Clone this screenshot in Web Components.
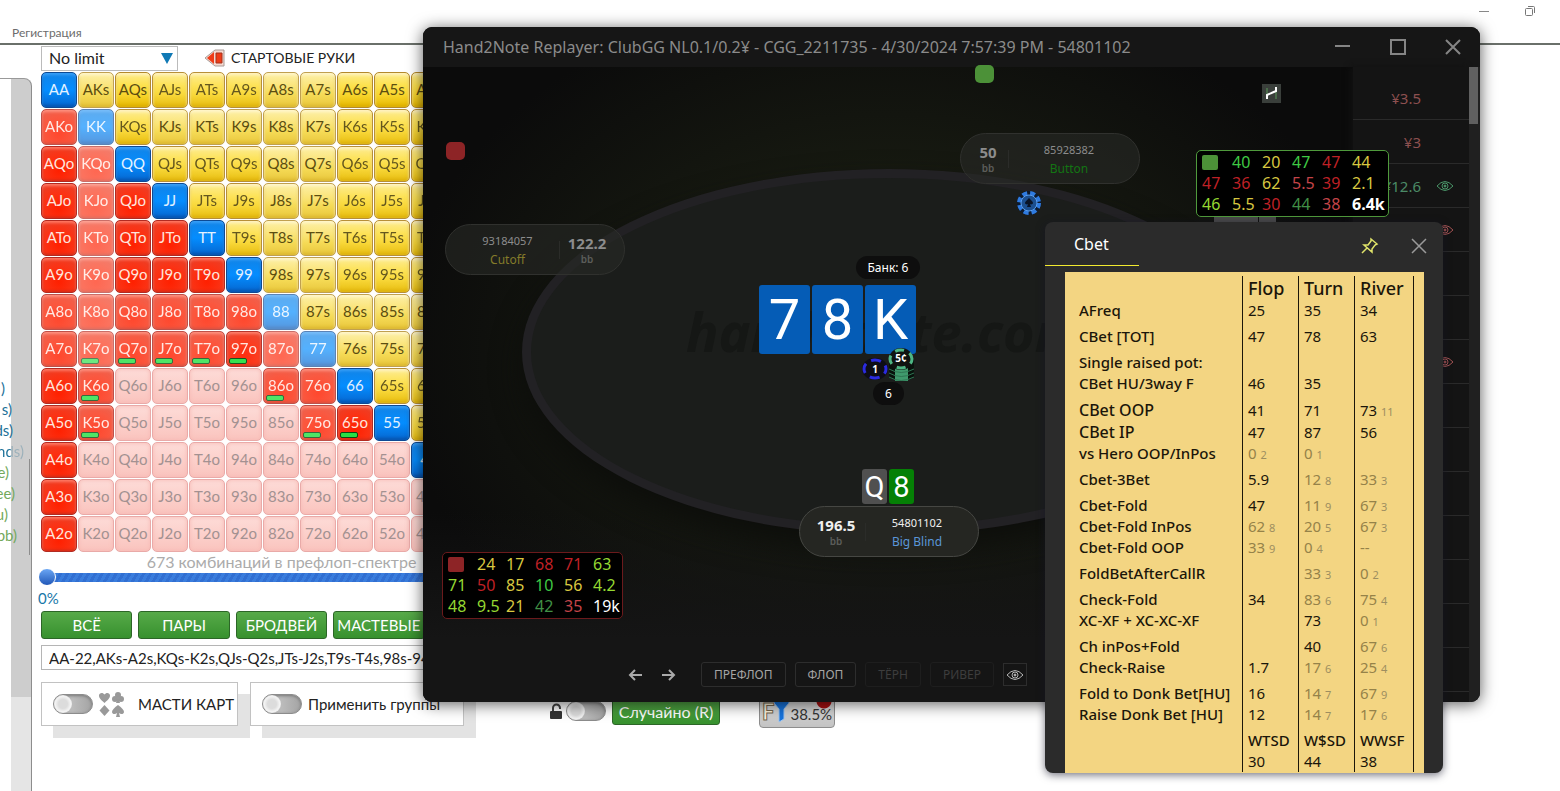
<!DOCTYPE html>
<html lang="ru">
<head>
<meta charset="UTF-8">
<meta name="viewport" content="width=device-width, initial-scale=1.0">
<title>Hand2Note Replayer</title>
<style>
    body {
        margin: 0;
        background: #fff;
        font-family: "Lato", "Open Sans", sans-serif;
        color: #222;
    }
</style>
</head>
<body>
<poker-desktop>
    <range-panel slot="main"></range-panel>
    <replayer-window slot="window" heading="Hand2Note Replayer: ClubGG NL0.1/0.2¥ - CGG_2211735 - 4/30/2024 7:57:39 PM - 54801102"></replayer-window>
    <hud-box class="hud-left" slot="window" color="#8d2426" line="#6b1a1c" col="29px"
        values="24:y 17:y 68:r 71:r 63:l 71:l 50:r 85:y 10:g 56:y 4.2:l 48:l 9.5:l 21:y 42:d 35:p 19k:w"></hud-box>
    <hud-box class="hud-right" slot="window" color="#4c9138" line="#4f9a3c" col="30px"
        values="40:g 20:y 47:g 47:r 44:y 47:r 36:r 62:y 5.5:p 39:r 2.1:y 46:l 5.5:y 30:r 44:d 38:p 6.4k:b"></hud-box>
    <stat-popup slot="window" heading="Cbet"></stat-popup>
</poker-desktop>

<script>
    // Page shell: top bar, left strip, main column, floating windows
    class PokerDesktop extends HTMLElement {
        constructor() {
            super();
            this.attachShadow({ mode: 'open' });
        }

        connectedCallback() {
            this.shadowRoot.innerHTML = `
                <style>
                    :host {
                        display: flex;
                        flex-direction: column;
                        position: relative;
                        height: 100vh;
                        overflow: hidden;
                    }
                    header {
                        display: flex;
                        justify-content: space-between;
                        height: 43px;
                        border-bottom: 2px solid #6a706a;
                    }
                    header a {
                        align-self: flex-end;
                        padding: 0 0 2px 12px;
                        font-size: 12px;
                        line-height: 16px;
                        color: #6c6c6c;
                        text-decoration: none;
                    }
                    .controls {
                        display: flex;
                        gap: 32px;
                        padding: 4px 23px 0 0;
                    }
                    button {
                        width: 14px;
                        height: 14px;
                        padding: 0;
                        border: 0;
                        background: none;
                    }
                    svg { display: block; }
                    .body {
                        display: flex;
                        flex: 1;
                        min-height: 0;
                    }
                    ::slotted([slot="main"]) { flex: 1; }
                    ::slotted([slot="window"]) { position: absolute; }
                    ::slotted(replayer-window) { top: 27px; left: 423px; right: 80px; bottom: 89px; }
                    ::slotted(.hud-left) { top: 552px; left: 442px; }
                    ::slotted(.hud-right) { top: 150px; right: 171px; padding-right: 6px; }
                    ::slotted(stat-popup) { top: 222px; right: 117px; bottom: 18px; }
                </style>
                <header>
                    <a href="#">Регистрация</a>
                    <div class="controls">
                        <button aria-label="Minimize"><svg width="14" height="14"><path d="M2 7.500h10" stroke="#888"/></svg></button>
                        <button aria-label="Restore"><svg width="14" height="14" fill="none" stroke="#777"><rect x="2.500" y="4.500" width="7" height="7" rx="1"/><path d="M5 2.500h5.500a1 1 0 0 1 1 1V9"/></svg></button>
                    </div>
                </header>
                <div class="body">
                    <side-strip></side-strip>
                    <slot name="main"></slot>
                </div>
                <slot name="window"></slot>
            `;
        }
    }

    // Cut-off legend and scroll track at the left edge
    class SideStrip extends HTMLElement {
        constructor() {
            super();
            this.attachShadow({ mode: 'open' });
        }

        connectedCallback() {
            const lines = [[')', 5, 'b'], ['s)', 12, 'b'], ['ds)', 13, 'b'], ['nds)', 24, 'b'],
                ['e)', 9, 'g'], ['ee)', 15, 'g'], ['u)', 8, 'g'], ['bb)', 17, 'g']];

            this.shadowRoot.innerHTML = `
                <style>
                    :host {
                        display: block;
                        box-sizing: border-box;
                        width: 32px;
                        margin-top: 33px;
                        border-top: 1px solid #999;
                        border-right: 1px solid #8d8d8d;
                        border-radius: 0 8px 0 0;
                        background: linear-gradient(#8d8d8d, #8d8d8d) 29px 380px / 1px 96px no-repeat,
                                    linear-gradient(#cdcdcd, #cdcdcd) 11px 0 / 20px 618px no-repeat,
                                    linear-gradient(#e5e5e5, #e5e5e5) 11px 618px / 20px 100% no-repeat;
                    }
                    ul {
                        margin: 0;
                        padding: 299px 0 0;
                        list-style: none;
                        font-size: 15px;
                        line-height: 21px;
                    }
                    li {
                        display: flex;
                        justify-content: flex-end;
                    }
                    .b { color: #1d7199; }
                    .g { color: #73a95c; }
                    /* text fades where it runs over the track */
                    .over {
                        background: linear-gradient(90deg, #1d7199 11px, #9bb0ba 11px);
                        background-clip: text;
                        -webkit-background-clip: text;
                        color: transparent;
                    }
                </style>
                <ul>
                    ${lines.map(([text, width, tone]) => `<li class="${tone} ${width > 20 ? 'over' : ''}" style="width:${width}px">${text}</li>`).join('')}
                </ul>
            `;
        }
    }

    class ToggleSwitch extends HTMLElement {
        constructor() {
            super();
            this.attachShadow({ mode: 'open' });
        }

        connectedCallback() {
            const label = this.getAttribute('label');

            this.shadowRoot.innerHTML = `
                <style>
                    :host { display: inline-flex; }
                    label {
                        display: flex;
                        align-items: center;
                        gap: 6px;
                    }
                    input {
                        appearance: none;
                        display: flex;
                        align-items: center;
                        box-sizing: border-box;
                        width: 40px;
                        height: 20px;
                        margin: 0;
                        border: 1px solid #8c8c8c;
                        border-radius: 10px;
                        background: linear-gradient(90deg, #bbb 50%, #a4a4a4);
                        box-shadow: inset 0 1px 3px #777;
                    }
                    input::before {
                        content: "";
                        width: 18px;
                        height: 18px;
                        border-radius: 50%;
                        background: radial-gradient(circle, #dcdcdc 35%, #f3f3f3 60%, #cfcfcf);
                    }
                    input:checked { justify-content: flex-end; }
                </style>
                <label><input type="checkbox" ${label ? `aria-label="${label}"` : ''}><slot></slot></label>
            `;
        }
    }

    class HandMatrix extends HTMLElement {
        constructor() {
            super();
            this.attachShadow({ mode: 'open' });
        }

        connectedCallback() {
            const ranks = 'AKQJT98765432';
            // one digit per hand: 4 is full weight, 0 is out of the range
            const weights = [
                '4243332244444', '2132222233333', '4143332233333', '4144332233333',
                '4144432233333', '4144442233333', '2122221222222', '2122231122222',
                '4200002243333', '4200000244333', '4000000000444', '4000000000044', '4000000000004'
            ];
            const marked = ['K7o', 'Q7o', 'J7o', 'T7o', '97o', 'K6o', '86o', 'K5o', '75o', '65o'];

            let cells = '';
            for (let r = 0; r < 13; r++) {
                for (let c = 0; c < 13; c++) {
                    const kind = r === c ? 'pair' : (c > r ? 'suited' : 'off');
                    const name = r === c ? ranks[r] + ranks[r]
                        : (c > r ? ranks[r] + ranks[c] + 's' : ranks[c] + ranks[r] + 'o');
                    const mark = marked.includes(name) ? 'marked' : '';
                    cells += `<button class="${kind} w${weights[r][c]} ${mark}">${name}</button>`;
                }
            }

            this.shadowRoot.innerHTML = `
                <style>
                    :host {
                        display: grid;
                        grid-template-columns: repeat(13, 36px);
                        grid-auto-rows: 36px;
                        gap: 1px;
                    }
                    button {
                        position: relative;
                        padding: 0 0 2px;
                        border: 1px solid #a98a2a;
                        border-radius: 5px;
                        font-family: inherit;
                        font-size: 15px;
                        line-height: 32px;
                        text-align: center;
                        white-space: nowrap;
                    }
                    .suited {
                        color: #5b4d10;
                        background: linear-gradient(#fdeb8e, #fde250 35%, #f8d52c 65%, #e6b800);
                        border-color: #b3892c;
                        box-shadow: inset 0 2px 3px #fff3c0, inset 0 -2px 3px #dcae00;
                    }
                    .off {
                        color: #ffe4dd;
                        background: radial-gradient(circle at 50% 70%, #ff2000, #fb3214 50%, #e8432c);
                        border-color: #b22b22;
                        box-shadow: inset 0 2px 3px #ff7b66, inset 0 -1px 3px #c92a18;
                    }
                    .pair {
                        color: #e4f2ff;
                        background: linear-gradient(#1283e6, #048dff 50%, #0666cf);
                        border-color: #0d4a94;
                        box-shadow: inset 0 2px 3px #3ba1f8, inset 0 -2px 3px #0754ae;
                    }
                    .w3 { opacity: 0.94; }
                    .w2 { opacity: 0.82; }
                    .w1 { opacity: 0.68; }
                    .w0 {
                        color: #a39191;
                        background: linear-gradient(#fddcd8, #fcd0cb 50%, #fac4be);
                        border-color: #e9aaa8;
                        box-shadow: inset 0 0 4px #f7b9b4;
                    }
                    .suited.w2 {
                        opacity: 1;
                        background: linear-gradient(#fdf0a8, #fae478 40%, #f5da55 65%, #e8c63c);
                        border-color: #c0a050;
                        box-shadow: inset 0 2px 3px #fff6cc, inset 0 -2px 3px #dcb830;
                    }
                    .marked::after {
                        content: "";
                        position: absolute;
                        left: 2px;
                        bottom: 2px;
                        width: 16px;
                        height: 4px;
                        border: 1px solid #0a4a12;
                        border-radius: 2px;
                        background: #28e045;
                    }
                </style>
                ${cells}
            `;
        }
    }

    class RangePanel extends HTMLElement {
        constructor() {
            super();
            this.attachShadow({ mode: 'open' });
        }

        connectedCallback() {
            this.shadowRoot.innerHTML = `
                <style>
                    :host {
                        display: block;
                        padding: 1px 0 0 9px;
                        font-size: 16px;
                    }
                    .top {
                        display: flex;
                        align-items: flex-start;
                        height: 26px;
                    }
                    .pick {
                        display: flex;
                        align-items: center;
                        box-sizing: border-box;
                        width: 137px;
                        height: 25px;
                        border: 1px solid #bbb;
                        padding-right: 4px;
                    }
                    select {
                        appearance: none;
                        flex: 1;
                        padding: 0 0 2px 7px;
                        border: 0;
                        background: none;
                        font: inherit;
                        color: inherit;
                    }
                    .hands {
                        display: flex;
                        align-items: center;
                        gap: 6px;
                        height: 23px;
                        margin-left: 26px;
                        padding: 0;
                        border: 0;
                        background: none;
                        font: inherit;
                        font-size: 14px;
                        color: inherit;
                    }
                    .range { width: 481px; }
                    .count {
                        margin: 0;
                        text-align: center;
                        line-height: 20px;
                        color: #ababab;
                    }
                    input[type="range"] {
                        appearance: none;
                        display: block;
                        width: 487px;
                        height: 18px;
                        margin: -4px 0 0 -3px;
                        background: repeating-linear-gradient(120deg, #3a7ddd 0 3px, #316fd2 3px 6px) 4px 5px / 100% 9px no-repeat;
                    }
                    input[type="range"]::-webkit-slider-thumb {
                        appearance: none;
                        width: 18px;
                        height: 18px;
                        border: 1px solid #fff;
                        border-radius: 50%;
                        background: linear-gradient(#6aa6f4, #2158b8);
                    }
                    output {
                        display: block;
                        margin-left: -3px;
                        padding: 3px 0 2px;
                        line-height: 18px;
                        font-size: 15px;
                        color: #1877a8;
                    }
                    .groups {
                        display: grid;
                        grid-template-columns: repeat(5, 1fr);
                        gap: 6px;
                        margin-top: 2px;
                    }
                    .green {
                        height: 28px;
                        padding: 0;
                        border: 1px solid #2c6627;
                        border-radius: 3px;
                        background: linear-gradient(#57aa49, #37912e);
                        font: inherit;
                        font-size: 15px;
                        color: #fff;
                    }
                    .combos {
                        display: block;
                        box-sizing: border-box;
                        width: 100%;
                        height: 25px;
                        margin-top: 6px;
                        padding: 0 7px;
                        border: 1px solid #b5b5b5;
                        font: inherit;
                        font-size: 15px;
                        color: inherit;
                    }
                    .options {
                        display: flex;
                        align-items: flex-start;
                        margin-top: 12px;
                    }
                    .card {
                        display: flex;
                        align-items: center;
                        box-sizing: border-box;
                        height: 44px;
                        margin-right: 12px;
                        padding-left: 11px;
                        border: 1px solid #c2c2c2;
                        background: #fff;
                        box-shadow: 12px 12px 0 #e3e3e3;
                    }
                    .suits { width: 197px; }
                    .apply { width: 214px; font-size: 15px; }
                    .suits span { padding-left: 8px; font-size: 15px; }
                    .tools {
                        display: flex;
                        align-items: center;
                        gap: 4px;
                        margin: 12px 0 0 74px;
                    }
                    .tools .green { width: 108px; margin-left: 2px; font-size: 16px; }
                    .filter {
                        display: flex;
                        align-items: flex-end;
                        height: 34px;
                        margin-left: 35px;
                        padding: 0 2px 4px;
                        border: 1px solid #8d8d8d;
                        border-radius: 4px;
                        background: radial-gradient(circle at 64px 6px, #a11 7px, #ddd 8px, transparent 9px),
                                    linear-gradient(#e2e2e2, #c3c3c3);
                        font: inherit;
                        font-size: 15px;
                        color: #333;
                    }
                    .filter b {
                        font-size: 22px;
                        line-height: 22px;
                        color: #fff6df;
                        -webkit-text-stroke: 1px #766850;
                    }
                </style>
                <div class="top">
                    <div class="pick">
                        <select aria-label="Лимит"><option>No limit</option></select>
                        <svg width="12" height="11"><path d="M0 0h12L6 11z" fill="#1079b5"/></svg>
                    </div>
                    <button class="hands">
                        <svg width="21" height="18"><path d="M1 9L11 1h9v16h-9z" fill="#f6d8cf" stroke="#a79b96"/><path d="M3 9l7-6v12z" fill="#ef3c18"/><path d="M12 4h6v10h-6z" fill="#ef3c18" stroke="#a3321c"/></svg>
                        СТАРТОВЫЕ РУКИ
                    </button>
                </div>
                <div class="range">
                    <hand-matrix></hand-matrix>
                    <p class="count">673 комбинаций в префлоп-спектре</p>
                    <input type="range" min="0" max="100" value="0" aria-label="Процент рук">
                    <output>0%</output>
                    <div class="groups">
                        <button class="green">ВСЁ</button>
                        <button class="green">ПАРЫ</button>
                        <button class="green">БРОДВЕЙ</button>
                        <button class="green">МАСТЕВЫЕ</button>
                    </div>
                    <input class="combos" type="text" aria-label="Диапазон" value="AA-22,AKs-A2s,KQs-K2s,QJs-Q2s,JTs-J2s,T9s-T4s,98s-94s">
                </div>
                <div class="options">
                    <div class="card suits">
                        <toggle-switch>
                            <svg width="25" height="25" fill="#999">
                                <path d="M5.500 11C1 7 0 5.500 0 3.500C0 .5 4 0 5.500 2.500C7 0 11 .5 11 3.500C11 5.500 10 7 5.500 11z"/>
                                <path d="M5.500 13l5 5.500-5 5.500-5-5.500z"/>
                                <circle cx="19" cy="3" r="3"/><circle cx="16" cy="7" r="3"/><circle cx="22" cy="7" r="3"/><path d="M19 4l2 7h-4z"/>
                                <path d="M19 13c4 3 6 5 6 7 0 2-3 3-5 1l1 4h-4l1-4c-2 2-5 1-5-1 0-2 2-4 6-7z"/>
                            </svg>
                            <span>МАСТИ КАРТ</span>
                        </toggle-switch>
                    </div>
                    <div class="card apply"><toggle-switch>Применить группы</toggle-switch></div>
                    <div class="tools">
                        <svg width="12" height="20" fill="none"><path d="M3 11V7a3 3 0 0 1 7 0v1" stroke="#444" stroke-width="2"/><rect y="10" width="12" height="8" rx="1" fill="#333"/></svg>
                        <toggle-switch label="Закрепить"></toggle-switch>
                        <button class="green">Случайно (R)</button>
                        <button class="filter">
                            <b>F</b>
                            <svg width="16" height="26"><path d="M0 3h15v3l-5 6v10l-5 3V12L0 6z" fill="#1673dd" stroke="#9ec5ef"/></svg>
                            38.5%
                        </button>
                    </div>
                </div>
            `;
        }
    }

    // Player plate on the table; reversed puts the stack on the right
    class PlayerSeat extends HTMLElement {
        constructor() {
            super();
            this.attachShadow({ mode: 'open' });
        }

        connectedCallback() {
            this.shadowRoot.innerHTML = `
                <style>
                    :host {
                        display: flex;
                        align-items: center;
                        box-sizing: border-box;
                        width: 180px;
                        height: 51px;
                        padding-right: 10px;
                        border: 1px solid #30312e;
                        border-radius: 26px;
                        background: rgba(40, 41, 38, 0.6);
                        color: #8c8c8c;
                        text-align: center;
                    }
                    :host([reversed]) { flex-direction: row-reverse; padding: 0 0 0 10px; }
                    :host([active]) { color: #f0f0f0; border-color: #464743; background: #252622; }
                    .stack { width: 40px; padding-left: 7px; }
                    :host([reversed]) .stack { width: 54px; padding: 0 10px 0 0; }
                    :host([active]) .stack { width: 58px; }
                    .stack b { display: block; font-size: 15px; line-height: 18px; }
                    small { display: block; font-size: 10px; line-height: 14px; color: #5c5d5a; font-weight: 600; }
                    hr { width: 0; height: 18px; margin: 0; border: 0; border-left: 1px solid #2b2c29; }
                    .who { flex: 1; font-size: 11px; line-height: 19px; }
                    .who div { font-size: 12px; color: var(--role); }
                </style>
                <div class="stack"><b>${this.getAttribute('stack')}</b><small>bb</small></div>
                <hr>
                <div class="who">${this.getAttribute('name')}<div><slot></slot></div></div>
            `;
        }
    }

    class PlayingCard extends HTMLElement {
        constructor() {
            super();
            this.attachShadow({ mode: 'open' });
        }

        connectedCallback() {
            this.shadowRoot.innerHTML = `
                <style>
                    :host {
                        display: flex;
                        align-items: center;
                        justify-content: center;
                        width: 51px;
                        height: 69px;
                        border-radius: 3px;
                        background: #055cb6;
                        font-family: Roboto, sans-serif;
                        font-size: 56px;
                        color: #fff;
                    }
                    :host([small]) { width: 25px; height: 35px; font-size: 29px; }
                    :host([suit="spade"]) { background: #505050; }
                    :host([suit="club"]) { background: #058005; }
                </style>
                <slot></slot>
            `;
        }
    }

    class ReplayerWindow extends HTMLElement {
        constructor() {
            super();
            this.attachShadow({ mode: 'open' });
        }

        connectedCallback() {
            const eye = (color) => `<svg width="18" height="12" fill="none" stroke="${color}"><path d="M1 6Q9-3 17 6Q9 15 1 6z"/><circle cx="9" cy="6" r="3"/><circle cx="9" cy="6" r="1" fill="${color}"/></svg>`;
            const rows = [['¥3.5', 'loss', ''], ['¥3', 'loss', ''], ['¥12.6', 'win', '#4a9468'], ['', '', '#a25353'],
                [], [], ['', '', '#a25353'], [], [], [], [], [], [], []];

            this.shadowRoot.innerHTML = `
                <style>
                    :host {
                        display: flex;
                        flex-direction: column;
                        overflow: hidden;
                        border-radius: 9px;
                        background: #151515;
                        box-shadow: 0 2px 16px rgba(0, 0, 0, 0.65);
                        font-family: "Noto Sans", sans-serif;
                        color: #8b8b8b;
                    }
                    header {
                        display: flex;
                        align-items: center;
                        justify-content: space-between;
                        height: 40px;
                        padding: 0 17px 0 20px;
                        background: #161616;
                    }
                    h1 {
                        margin: 0;
                        font-size: 16px;
                        font-weight: 400;
                        white-space: nowrap;
                    }
                    .controls { display: flex; gap: 35px; }
                    button {
                        padding: 0;
                        border: 0;
                        background: none;
                        color: inherit;
                        font-family: inherit;
                    }
                    svg { display: block; }
                    .body { display: flex; flex: 1; min-height: 0; }
                    .table {
                        display: flex;
                        flex-direction: column;
                        flex: 1;
                        background: linear-gradient(transparent 70%, #151515 90%),
                                    radial-gradient(ellipse at 50% 45%, #171a11 35%, #0b0b0b 75%);
                    }
                    .stage { position: relative; flex: 1; }
                    /* stage items are placed on the table canvas */
                    .stage > * { position: absolute; }
                    .felt {
                        left: 99px;
                        top: 102px;
                        box-sizing: border-box;
                        width: 734px;
                        height: 366px;
                        border: 9px solid #222124;
                        border-radius: 50%;
                        background: #1b1d1b;
                        box-shadow: 0 16px 30px #0d0e0b;
                    }
                    .brand {
                        left: 263px;
                        top: 227px;
                        font-size: 54px;
                        font-weight: 700;
                        font-style: italic;
                        color: #151715;
                    }
                    .dot { width: 19px; height: 18px; border-radius: 5px; }
                    .row { display: flex; gap: 2px; }
                    .pill {
                        border-radius: 12px;
                        background: #0e0e0e;
                        color: #fff;
                        font-size: 12px;
                        line-height: 23px;
                        text-align: center;
                    }
                    footer {
                        display: flex;
                        align-items: center;
                        height: 25px;
                        padding: 0 0 15px 205px;
                    }
                    footer > * { margin-right: 9px; }
                    footer .arrow { margin-right: 16px; }
                    footer .gap { margin-right: 25px; }
                    .street {
                        height: 25px;
                        padding: 0 12px;
                        border: 1px solid #2d2d2d;
                        border-radius: 3px;
                        font-size: 12px;
                        color: #a5a5a5;
                    }
                    .street:disabled { border-color: #1e1e1e; color: #3d3d3d; }
                    .eye { height: 23px; padding: 0 2px; border: 1px solid #2d2d2d; }
                    ol {
                        width: 116px;
                        margin: 0;
                        padding: 9px 0 0;
                        list-style: none;
                        background: #141414;
                        box-shadow: -3px 0 6px #111;
                    }
                    li {
                        display: flex;
                        align-items: center;
                        justify-content: flex-end;
                        box-sizing: border-box;
                        height: 44px;
                        border-bottom: 1px solid #2a2a2a;
                        font-size: 15px;
                    }
                    li span { padding-right: 15px; }
                    li i { width: 18px; padding-right: 15px; }
                    .loss { color: #8d5050; }
                    .win { color: #4b8a66; }
                    .track { width: 11px; background: #202020; }
                    .thumb { width: 9px; height: 57px; background: #606060; }
                </style>
                <header>
                    <h1>${this.getAttribute('heading')}</h1>
                    <div class="controls">
                        <button aria-label="Minimize"><svg width="20" height="20"><path d="M2 9h15" stroke="#858585" stroke-width="2"/></svg></button>
                        <button aria-label="Maximize"><svg width="20" height="20"><rect x="3" y="3" width="14" height="14" fill="none" stroke="#858585" stroke-width="2"/></svg></button>
                        <button aria-label="Close"><svg width="20" height="20"><path d="M3 3l14 14M17 3L3 17" stroke="#858585" stroke-width="2"/></svg></button>
                    </div>
                </header>
                <div class="body">
                    <div class="table">
                        <div class="stage">
                            <div class="felt"></div>
                            <div class="brand">hand2note.com</div>
                            <div class="dot" style="left:23px;top:75px;background:#8d2426"></div>
                            <div class="dot" style="left:552px;top:-2px;background:#4c9138"></div>
                            <svg style="left:839px;top:17px" width="19" height="19"><path fill="#3a3f3b" d="M0 0h19v19H0z"/><path d="M5 4v11M14 4v11" stroke="#5b9a5b"/><path d="M5 15v-4l9-4V3" fill="none" stroke="#fff" stroke-width="2"/></svg>
                            <svg style="left:791px;top:150px" width="62" height="6"><path fill="#4a4a4a" d="M0 0h44v6H0zM45 0h17v6H45z"/></svg>
                            <player-seat reversed stack="122.2" name="93184057" style="left:22px;top:157px;--role:#847b2a">Cutoff</player-seat>
                            <player-seat stack="50" name="85928382" style="left:537px;top:66px;--role:#137413">Button</player-seat>
                            <svg style="left:593px;top:123px" width="26" height="26" fill="none"><circle cx="13" cy="13" r="12" fill="#0d1a2e"/><circle cx="13" cy="13" r="10" stroke="#2f7be0" stroke-width="4" stroke-dasharray="5 3"/><circle cx="13" cy="13" r="8" fill="#1c4f8f" stroke="#5a9ff0"/><path d="M13 8c3 3 4 4 4 5s-2 2-3 1l1 3h-4l1-3c-1 1-3 0-3-1s1-2 4-5z" fill="#0a1426"/></svg>
                            <div class="pill" style="left:433px;top:189px;width:64px">Банк: 6</div>
                            <div class="row" style="left:336px;top:218px">
                                <playing-card>7</playing-card><playing-card>8</playing-card><playing-card>K</playing-card>
                            </div>
                            <svg style="left:438px;top:280px" width="56" height="36" fill="none">
                                <ellipse cx="14" cy="22" rx="13" ry="11" fill="#0d0d16"/>
                                <ellipse cx="14" cy="22" rx="11" ry="9" stroke="#2b2be0" stroke-width="3" stroke-dasharray="10 6" stroke-dashoffset="5"/>
                                <path d="M28 12h25v18q-12 8-25 0z" fill="#08120c"/>
                                <path d="M34 17h13v17H34z" fill="#3f9a6d"/><path d="M28 22q12 7 25 0M28 26q12 7 25 0M28 30q12 7 25 0" stroke="#2f7553"/>
                                <ellipse cx="40" cy="12" rx="12" ry="11" fill="#101311"/>
                                <ellipse cx="40" cy="12" rx="11" ry="9" stroke="#4db583" stroke-width="3" stroke-dasharray="9 6" stroke-dashoffset="4"/>
                                <g fill="#fff" font-size="10" font-weight="700" text-anchor="middle"><text x="14" y="26">1</text><text x="40" y="15">5¢</text></g>
                            </svg>
                            <div class="pill" style="left:450px;top:315px;width:31px">6</div>
                            <div class="row" style="left:439px;top:402px">
                                <playing-card small suit="spade">Q</playing-card><playing-card small suit="club">8</playing-card>
                            </div>
                            <player-seat active stack="196.5" name="54801102" style="left:376px;top:439px;--role:#5a96d8">Big Blind</player-seat>
                        </div>
                        <footer>
                            <button class="arrow" aria-label="Back"><svg width="16" height="16"><path d="M14 8H2M7 3L2 8l5 5" fill="none" stroke="#aaa" stroke-width="2"/></svg></button>
                            <button class="gap" aria-label="Forward"><svg width="16" height="16"><path d="M2 8h12M9 3l5 5-5 5" fill="none" stroke="#aaa" stroke-width="2"/></svg></button>
                            <button class="street">ПРЕФЛОП</button>
                            <button class="street">ФЛОП</button>
                            <button class="street" disabled>ТЁРН</button>
                            <button class="street" disabled>РИВЕР</button>
                            <button class="eye" aria-label="Show cards">${eye('#b5b5b5')}</button>
                        </footer>
                    </div>
                    <ol>
                        ${rows.map(([sum = '', tone = '', mark = '']) => `<li><span class="${tone}">${sum}</span><i>${mark ? eye(mark) : ''}</i></li>`).join('')}
                    </ol>
                    <div class="track"><div class="thumb"></div></div>
                </div>
            `;
        }
    }

    class HudBox extends HTMLElement {
        constructor() {
            super();
            this.attachShadow({ mode: 'open' });
        }

        connectedCallback() {
            const values = this.getAttribute('values').split(' ').map((item) => item.split(':'));

            this.shadowRoot.innerHTML = `
                <style>
                    :host {
                        display: grid;
                        grid-template-columns: repeat(6, ${this.getAttribute('col')});
                        padding: 1px 0 1px 5px;
                        border: 1px solid ${this.getAttribute('line')};
                        border-radius: 5px;
                        background: #000;
                        font-family: "Noto Sans", sans-serif;
                        font-size: 16px;
                        line-height: 21px;
                    }
                    span { white-space: nowrap; }
                    .mark {
                        align-self: center;
                        width: 16px;
                        height: 15px;
                        border-radius: 2px;
                        background: ${this.getAttribute('color')};
                    }
                    .y { color: #d8c840; }
                    .r { color: #bf2026; }
                    .p { color: #c44448; }
                    .g { color: #3fc944; }
                    .l { color: #95d832; }
                    .d { color: #419046; }
                    .w { color: #fff; }
                    .b { color: #fff; font-weight: 700; }
                </style>
                <span class="mark"></span>
                ${values.map(([text, tone]) => `<span class="${tone}">${text}</span>`).join('')}
            `;
        }
    }

    class StatPopup extends HTMLElement {
        constructor() {
            super();
            this.attachShadow({ mode: 'open' });
        }

        connectedCallback() {
            // label, flop, turn, river, row class; "12/8" is a value with its small sample
            const rows = [
                ['AFreq', '25', '35', '34', ''],
                ['CBet [TOT]', '47', '78', '63', 'gap'],
                ['Single raised pot:', '', '', '', 'gap'],
                ['CBet HU/3way F', '46', '35', '', ''],
                ['CBet OOP', '41', '71', '73/11', 'gap tall'],
                ['CBet IP', '47', '87', '56', 'tall'],
                ['vs Hero OOP/InPos', '0/2', '0/1', '', ''],
                ['Cbet-3Bet', '5.9', '12/8', '33/3', 'gap'],
                ['Cbet-Fold', '47', '11/9', '67/3', 'gap'],
                ['Cbet-Fold InPos', '62/8', '20/5', '67/3', ''],
                ['Cbet-Fold OOP', '33/9', '0/4', '--', ''],
                ['FoldBetAfterCallR', '', '33/3', '0/2', 'gap'],
                ['Check-Fold', '34', '83/6', '75/4', 'gap'],
                ['XC-XF + XC-XC-XF', '', '73', '0/1', ''],
                ['Ch inPos+Fold', '', '40', '67/6', 'gap'],
                ['Check-Raise', '1.7', '17/6', '25/4', ''],
                ['Fold to Donk Bet[HU]', '16', '14/7', '67/9', 'gap'],
                ['Raise Donk Bet [HU]', '12', '14/7', '17/6', ''],
                ['', 'WTSD', 'W$SD', 'WWSF', 'gap strong'],
                ['', '30', '44', '38', '']
            ];
            const cell = (text) => {
                const [value, sample] = text.split('/');
                const weak = (sample && sample < 10) || value === '--';
                return `<td class="${weak ? 'weak' : ''}">${value}${sample ? ` <small>${sample}</small>` : ''}</td>`;
            };

            this.shadowRoot.innerHTML = `
                <style>
                    :host {
                        display: flex;
                        flex-direction: column;
                        overflow: hidden;
                        border-radius: 8px;
                        background: #2b2b2b;
                        box-shadow: 0 2px 8px rgba(20, 20, 40, 0.6);
                        font-family: "Noto Sans", sans-serif;
                        color: #fff;
                    }
                    header {
                        display: flex;
                        align-items: center;
                        height: 44px;
                        padding-right: 15px;
                        gap: 31px;
                    }
                    h2 {
                        box-sizing: border-box;
                        width: 94px;
                        height: 44px;
                        margin: 0 auto 0 0;
                        padding-left: 29px;
                        border-bottom: 1px solid #f2ea30;
                        font-size: 16px;
                        font-weight: 400;
                        line-height: 44px;
                    }
                    button {
                        padding: 4px 0 0;
                        border: 0;
                        background: none;
                    }
                    svg { display: block; }
                    .sheet {
                        flex: 1;
                        min-height: 0;
                        overflow: hidden;
                        margin: 6px 19px 0 20px;
                        padding: 4px 10px 0 0;
                        background: #f3d582;
                        color: #1b160a;
                    }
                    table {
                        border-collapse: separate;
                        border-spacing: 0;
                        table-layout: fixed;
                        width: 349px;
                        font-size: 15px;
                        line-height: 21px;
                        white-space: nowrap;
                    }
                    col.label { width: 177px; }
                    col.stat { width: 56px; }
                    th, td {
                        padding: 0 0 0 5px;
                        border-left: 1px solid #1b160a;
                        text-align: left;
                        vertical-align: middle;
                        font-weight: 400;
                    }
                    td:last-child, th:last-child { border-right: 1px solid #1b160a; }
                    thead th { font-size: 18px; line-height: 24px; font-weight: 500; }
                    tr > :first-child {
                        padding-left: 14px;
                        border-left: 0;
                        font-weight: 500;
                    }
                    .gap > * { padding-top: 5px; }
                    .tall > * { line-height: 22px; }
                    .tall th { font-size: 16px; }
                    .strong td { font-weight: 500; }
                    .weak { color: #958249; }
                    small { font-size: 11px; line-height: 11px; color: #9d8e60; }
                </style>
                <header>
                    <h2>${this.getAttribute('heading')}</h2>
                    <button aria-label="Pin"><svg width="18" height="18" fill="none" stroke="#dfe36a" stroke-width="1.500"><path d="M10 2l6 5-2 1-3 4v3L3 8h4l3-4zM6 11l-5 5"/></svg></button>
                    <button aria-label="Close"><svg width="18" height="18"><path d="M2 2l14 14M16 2L2 16" stroke="#9a9a9a" stroke-width="1.500"/></svg></button>
                </header>
                <div class="sheet">
                    <table>
                        <colgroup><col class="label"><col class="stat"><col class="stat"><col></colgroup>
                        <thead><tr><th></th><th>Flop</th><th>Turn</th><th>River</th></tr></thead>
                        <tbody>
                            ${rows.map(([label, flop, turn, river, kind]) => `<tr class="${kind}"><th>${label}</th>${cell(flop)}${cell(turn)}${cell(river)}</tr>`).join('')}
                        </tbody>
                    </table>
                </div>
            `;
        }
    }

    customElements.define('side-strip', SideStrip);
    customElements.define('toggle-switch', ToggleSwitch);
    customElements.define('hand-matrix', HandMatrix);
    customElements.define('player-seat', PlayerSeat);
    customElements.define('playing-card', PlayingCard);
    customElements.define('range-panel', RangePanel);
    customElements.define('replayer-window', ReplayerWindow);
    customElements.define('hud-box', HudBox);
    customElements.define('stat-popup', StatPopup);
    customElements.define('poker-desktop', PokerDesktop);
</script>
</body>
</html>
